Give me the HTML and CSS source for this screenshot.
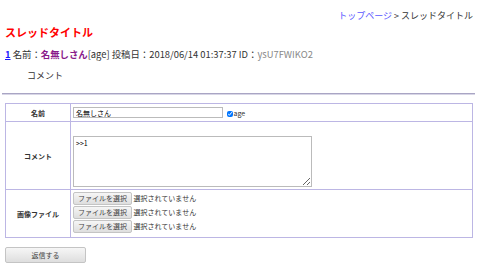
FILE: index.html
```html
<!DOCTYPE html>
<html lang="ja">
<head>
<meta charset="UTF-8">
<title>スレッドタイトル</title>
<link rel="stylesheet" href="styles.css">
</head>
<body>
  <div class="topic-path">
    <a href="#">トップページ</a> &gt; スレッドタイトル
  </div>

  <h1 class="thread-title">スレッドタイトル</h1>

  <div class="post">
    <div class="post-head">
      <a class="post-no" href="#">1</a> 名前：<span class="post-name">名無しさん</span>[age] 投稿日：2018/06/14 01:37:37 ID：<span class="post-id">ysU7FWIKO2</span>
    </div>
    <div class="post-body">コメント</div>
  </div>

  <hr class="divider">

  <form class="reply-form">
    <table class="form-table">
      <tr class="row-name">
        <th>名前</th>
        <td>
          <input type="text" class="name-input" value="名無しさん">
          <label class="age"><input type="checkbox" checked>age</label>
        </td>
      </tr>
      <tr class="row-comment">
        <th>コメント</th>
        <td><textarea class="comment-input">&gt;&gt;1</textarea></td>
      </tr>
      <tr class="row-file">
        <th>画像ファイル</th>
        <td>
          <div class="file-line"><span class="file-btn">ファイルを選択</span> 選択されていません</div>
          <div class="file-line"><span class="file-btn">ファイルを選択</span> 選択されていません</div>
          <div class="file-line"><span class="file-btn">ファイルを選択</span> 選択されていません</div>
        </td>
      </tr>
    </table>
    <button type="button" class="submit-btn">返信する</button>
  </form>
</body>
</html>
```

FILE: styles.css
```css
body {
  margin: 0;
  font-family: "Noto Sans CJK JP", sans-serif;
  color: #333;
  background-color: #fff;
}

a {
  color: #5a5aff;
  text-decoration: none;
}

.topic-path {
  text-align: right;
  font-size: 9px;
  line-height: 14px;
  padding: 9px 7px 0 0;
}

.thread-title {
  font-size: 11px;
  line-height: 14px;
  color: #f00;
  margin: 2px 0 0 5px;
}

.post-head {
  font-size: 9.4px;
  line-height: 14px;
  margin: 8px 0 0 5px;
}

.post-no {
  color: #1a1aff;
  font-weight: bold;
  text-decoration: underline;
}

.post-name {
  color: #8a1a8a;
  font-weight: bold;
}

.post-id {
  color: #888;
}

.post-body {
  font-size: 9px;
  line-height: 14px;
  margin-top: 8px;
  padding-left: 27px;
}

.divider {
  margin: 10px 5px 0 2px;
  border: none;
  border-top: 1px solid #a9a5c4;
  border-bottom: 1px solid #d8d6e6;
  height: 0;
}

.reply-form {
  margin: 8px 0 0 5px;
}

.form-table {
  width: 468px;
  border-collapse: collapse;
  font-size: 7px;
}

.form-table th,
.form-table td {
  border: 1px solid #bcb6e4;
  padding: 0 2px;
}

.form-table th {
  width: 60px;
  text-align: center;
  font-weight: bold;
}

.row-name {
  height: 18px;
}

.name-input {
  width: 150px;
  height: 11px;
  box-sizing: border-box;
  border: 1px solid #bbb;
  font-family: inherit;
  font-size: 7px;
  padding: 0 2px;
  margin: 0;
  vertical-align: middle;
}

.age {
  vertical-align: middle;
}

.age input {
  width: 6px;
  height: 6px;
  margin: 0 1px 0 2px;
  vertical-align: middle;
}

.row-comment {
  height: 68px;
}

.row-comment td {
  padding-top: 13px;
  padding-bottom: 2px;
}

.comment-input {
  display: block;
  width: 239px;
  height: 51px;
  box-sizing: border-box;
  border: 1px solid #bbb;
  font-family: inherit;
  font-size: 7px;
  padding: 1px 2px;
  margin: 0;
  resize: both;
}

.row-file td {
  padding-top: 2px;
  padding-bottom: 3px;
}

.file-line {
  height: 14px;
  line-height: 13px;
}

.file-btn {
  display: inline-block;
  width: 59px;
  height: 13px;
  box-sizing: border-box;
  border: 1px solid #c4c4c4;
  border-radius: 2px;
  background: linear-gradient(#f6f6f6, #dedede);
  text-align: center;
  line-height: 11px;
  color: #444;
  vertical-align: top;
}

.submit-btn {
  display: block;
  margin-top: 9px;
  width: 81px;
  height: 16px;
  border: 1px solid #c4c4c4;
  border-radius: 2px;
  background: linear-gradient(#f6f6f6, #dedede);
  font-family: inherit;
  font-size: 7px;
  color: #444;
  padding: 0;
}
```
